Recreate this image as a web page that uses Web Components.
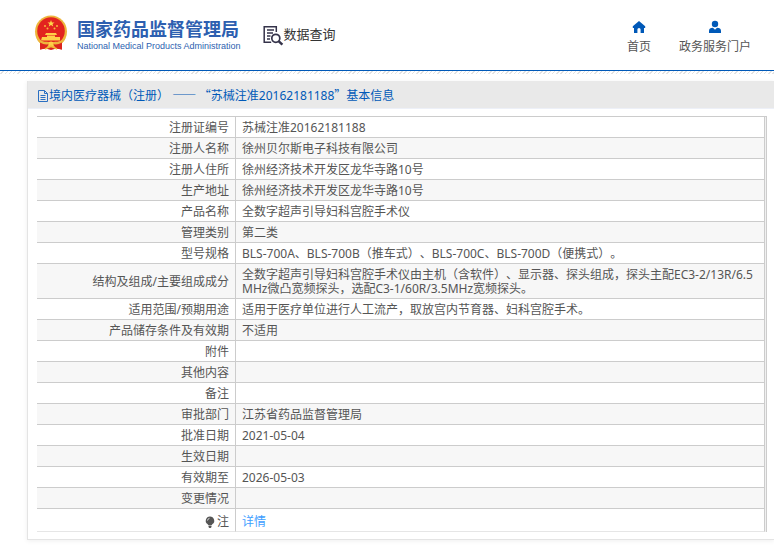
<!DOCTYPE html>
<html lang="zh-CN">
<head>
<meta charset="utf-8">
<title>国家药品监督管理局 数据查询</title>
<style>
:root{--blue:#0059b8;--text:#555;--line:#ccc;--stripe:#f7f7f7;--cjk:"Noto Sans CJK SC",sans-serif}
html,body{margin:0;background:#fff}
body{font:12px/14px "Noto Sans","Noto Sans CJK SC",sans-serif;color:var(--text);text-spacing-trim:space-all}
</style>
</head>
<body>
<site-header>
  <site-logo slot="brand"></site-logo>
  <query-mark slot="brand">数据查询</query-mark>
  <nav-item slot="nav" icon="home">首页</nav-item>
  <nav-item slot="nav" icon="user">政务服务门户</nav-item>
</site-header>
<main>
  <info-panel>
    <span slot="title">境内医疗器械（注册） <span style="font-family:var(--cjk)">—— “</span>苏械注准20162181188<span style="font-family:var(--cjk)">”</span>基本信息</span>
    <record-table></record-table>
  </info-panel>
</main>
<script>
class Base extends HTMLElement{
  connectedCallback(){
    if(!this.shadowRoot)this.attachShadow({mode:'open'}).innerHTML=this.render();
  }
}
customElements.define('site-header',class extends Base{render(){return `
<style>
:host{display:block}
header{display:flex;justify-content:space-between;align-items:flex-start;height:70px;padding:0 23px 0 34px;border-bottom:1px solid var(--blue)}
.brand{display:flex;padding-top:15px;gap:22px}
nav{display:flex;gap:28px;padding-top:20px}
.hatch{height:3px;background:repeating-linear-gradient(135deg,#fff 0 2px,#e2e2e2 2px 3px)}
</style>
<header><div class="brand"><slot name="brand"></slot></div><nav><slot name="nav"></slot></nav></header><div class="hatch"></div>`}});

customElements.define('site-logo',class extends Base{render(){return `
<style>
:host{display:block}
a{display:flex;gap:9px;color:#2d5fb0;text-decoration:none}
svg{width:34px;height:36px;flex:none}
b{display:block;font:700 18px/24px var(--cjk);white-space:nowrap;padding-top:1px}
small{display:block;font:9px/12px "Liberation Sans",Arial,sans-serif;white-space:nowrap}
</style>
<a href="#"><svg viewBox="0 0 34 36" aria-hidden="true">
<path d="M7 27 6 34.500l5.500-1 5.500 1.500 5.500-1.500 5.500 1-1-7.500z" fill="#d8231d"/>
<circle cx="17" cy="16.500" r="16" fill="#eeb53c"/>
<circle cx="17" cy="16" r="13.800" fill="#e2231f"/>
<path d="m17 5 .9 2.400h2.600l-2 1.600.7 2.500-2.200-1.500-2.200 1.500.7-2.500-2-1.600h2.600z" fill="#ffd84a"/>
<g fill="#f7b83c"><circle cx="11" cy="11" r="1"/><circle cx="23" cy="11" r="1"/><circle cx="13.500" cy="13.500" r="1"/><circle cx="20.500" cy="13.500" r="1"/></g>
<path d="M12 18h10l1 2H11zM13 20.500h8V22h-8zM8 22h18v3.500H7z" fill="#ffce48"/>
<path d="M2.500 23c2 5 5 6.500 8 7l6.500-2 6.500 2c3-.5 6-2 8-7-4 3.500-8 4-14.500 4S6.500 26.500 2.500 23z" fill="#eeb53c"/>
<path d="M6 27.500q5 3 9 1.500l-3 4.500-6 1zM28 27.500q-5 3-9 1.500l3 4.500 6 1z" fill="#dc251e"/>
<circle cx="17" cy="29" r="2.600" fill="#ffce48"/>
<path d="m11 34 6-3 6 3" stroke="#f3bd3a" stroke-width="1.400" fill="none"/>
</svg><span><b>国家药品监督管理局</b><small>National Medical Products Administration</small></span></a>`}});

customElements.define('query-mark',class extends Base{render(){return `
<style>
:host{display:flex;align-items:flex-start;padding-top:9px;font:400 13px/20px var(--cjk);color:#333;white-space:nowrap}
svg{width:21px;height:22px;flex:none}
</style>
<svg viewBox="0 0 21 22" fill="none" stroke="#35334a" aria-hidden="true">
<path d="M13.300 8V2.800H1.200v15.400h7" stroke-width="1.500"/>
<path d="M4 6h7M4 9h6M4 12h3.500M4 15h3" stroke-width="1.300"/>
<circle cx="12.800" cy="14.300" r="4" stroke-width="1.700"/><path d="m15.800 17.300 3.600 3.400" stroke-width="2.400"/>
</svg><slot></slot>`}});

customElements.define('nav-item',class extends Base{render(){
const p=this.getAttribute('icon')==='home'
?'<path d="M7 1 .8 6.200V8H2v5h3.400V9.500a1.600 1.600 0 0 1 3.200 0V13H12V8h1.200V6.200z"/>'
:'<circle cx="7" cy="4" r="3.200"/><path d="M1 13v-2c0-2 1.400-3.200 4-3.200l2 2 2-2c2.600 0 4 1.200 4 3.200v2z"/>';
return `
<style>
:host{display:block}
a{display:flex;flex-direction:column;align-items:center;gap:3px;color:var(--text);text-decoration:none;font:12px/18px var(--cjk);white-space:nowrap}
svg{width:14px;height:14px;fill:var(--blue)}
</style>
<a href="#"><svg viewBox="0 0 14 14" aria-hidden="true">${p}</svg><slot></slot></a>`}});

customElements.define('info-panel',class extends Base{render(){return `
<style>
:host{display:block;margin:7px 0 9px 27px;border-left:1px solid #e4e4e4;border-bottom:1px solid #e4e4e4;box-shadow:0 1px 5px #0001}
h1{display:flex;align-items:center;margin:0;height:25px;padding:2px 9px 0;background:#e9e9e9;color:var(--blue);font-size:12px;font-weight:400;border-bottom:1px solid #edf0f8}
svg{width:12px;height:12px;flex:none}
.body{padding:7px 7px 7px 9px}
</style>
<h1><svg viewBox="0 0 12 12" fill="none" stroke="#2a6fc2" aria-hidden="true"><path d="M1.500.5h6l3 3v8h-9zM7.500.5v3h3M3.500 5.500h5M3.500 7.500h5M3.500 9.500h5"/></svg><slot name="title"></slot></h1>
<div class="body"><slot></slot></div>`}});

const rows=[
['注册证编号','苏械注准20162181188'],
['注册人名称','徐州贝尔斯电子科技有限公司'],
['注册人住所','徐州经济技术开发区龙华寺路10号'],
['生产地址','徐州经济技术开发区龙华寺路10号'],
['产品名称','全数字超声引导妇科宫腔手术仪'],
['管理类别','第二类'],
['型号规格','BLS-700A、BLS-700B（推车式）、BLS-700C、BLS-700D（便携式）。'],
['结构及组成/主要组成成分','全数字超声引导妇科宫腔手术仪由主机（含软件）、显示器、探头组成，探头主配EC3-2/13R/6.5<wbr>MHz微凸宽频探头，选配C3-1/60R/3.5MHz宽频探头。'],
['适用范围/预期用途','适用于医疗单位进行人工流产，取放宫内节育器、妇科宫腔手术。'],
['产品储存条件及有效期','不适用'],
['附件',''],['其他内容',''],['备注',''],
['审批部门','江苏省药品监督管理局'],
['批准日期','2021-05-04'],['生效日期',''],['有效期至','2026-05-03'],['变更情况','']];
customElements.define('record-table',class extends Base{render(){return `
<style>
:host{display:block}
table{width:100%;border-collapse:separate;border-spacing:0;border-top:1px solid var(--line);border-right:1px solid var(--line);padding-right:1px;background:#f0f0f0}
th,td{border-right:1px solid var(--line);border-bottom:1px solid var(--line);padding:4px 6px 2px;height:14px;font-weight:400;line-height:14px;background:#fff}
th{width:186px;text-align:right}
td{text-align:left}
tr:nth-child(even)>*{background:var(--stripe)}
tr:last-child>*{border-bottom-color:#e6e6e6;height:15px;padding-top:5px}
a{color:#409eff;text-decoration:none}
svg{width:10px;height:12px;vertical-align:-2px;margin-right:2px}
</style>
<table><tbody>${rows.map(r=>`<tr><th scope="row">${r[0]}</th><td>${r[1]}</td></tr>`).join('')}
<tr><th scope="row"><svg viewBox="0 0 10 12" aria-hidden="true"><path d="M5 .5a4.200 4.200 0 0 1 2.500 7.600L6.800 9H3.200l-.7-.9A4.200 4.200 0 0 1 5 .5zM3.500 9.500h3V11L5.700 12H4.300L3.500 11z" fill="#555"/><path d="M2.500 4.500Q2.700 2.700 4.500 2.300" stroke="#ddd" fill="none"/></svg>注</th><td><a href="#">详情</a></td></tr>
</tbody></table>`}});
</script>
</body>
</html>
